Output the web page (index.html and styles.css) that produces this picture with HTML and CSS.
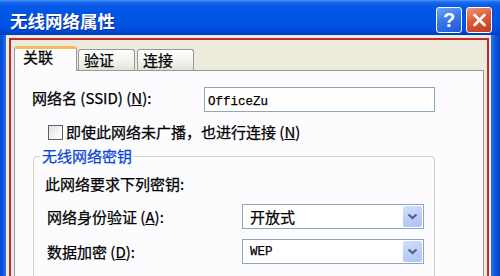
FILE: index.html
```html
<!DOCTYPE html>
<html lang="zh-CN">
<head>
<meta charset="utf-8">
<title>无线网络属性</title>
<link rel="stylesheet" href="styles.css">
</head>
<body>
<div class="window">
  <div class="titlebar">
    <span class="title">无线网络属性</span>
    <div class="caption-buttons">
      <span class="cbtn help">?</span>
      <span class="cbtn close">
        <svg width="23" height="24" viewBox="0 0 23 24"><path d="M6.5 7 L16.5 17 M16.5 7 L6.5 17" stroke="#fff" stroke-width="2.6" stroke-linecap="round" fill="none"/></svg>
      </span>
    </div>
  </div>
  <div class="frame">
    <div class="client">
      <div class="highlight">
        <div class="tabs">
          <div class="tab active">关联</div>
          <div class="tab second">验证</div>
          <div class="tab third">连接</div>
        </div>
        <div class="panel">
          <div class="row ssid">
            <span class="lbl lbl-ssid">网络名 (SSID) (<u>N</u>):</span>
            <div class="textbox"><span class="mono">OfficeZu</span></div>
          </div>
          <div class="row check">
            <span class="checkbox"></span>
            <span class="check-text">即使此网络未广播，也进行连接 (<u>N</u>)</span>
          </div>
          <fieldset class="group">
            <legend>无线网络密钥</legend>
            <div class="note">此网络要求下列密钥:</div>
            <div class="row field">
              <span class="lbl lbl-field">网络身份验证 (<u>A</u>):</span>
              <div class="select">
                <span class="select-value">开放式</span>
                <span class="arrow"><svg width="11" height="7" viewBox="0 0 11 7"><path d="M1.5 1.5 L5.5 5 L9.5 1.5" stroke="#4B6390" stroke-width="2.2" fill="none"/></svg></span>
              </div>
            </div>
            <div class="row field second-field">
              <span class="lbl lbl-field">数据加密 (<u>D</u>):</span>
              <div class="select">
                <span class="select-value mono">WEP</span>
                <span class="arrow"><svg width="11" height="7" viewBox="0 0 11 7"><path d="M1.5 1.5 L5.5 5 L9.5 1.5" stroke="#4B6390" stroke-width="2.2" fill="none"/></svg></span>
              </div>
            </div>
          </fieldset>
        </div>
      </div>
    </div>
  </div>
</div>
</body>
</html>
```
FILE: styles.css
```css
* { box-sizing: border-box; }
html, body { margin: 0; padding: 0; }
body {
  width: 500px;
  height: 276px;
  overflow: hidden;
  background: #0055E5;
  font-family: "Noto Sans CJK SC", "Noto Sans", sans-serif;
  font-size: 15px;
  color: #000;
}
.window {
  width: 500px;
  height: 276px;
  display: flex;
  flex-direction: column;
  overflow: hidden;
}
.titlebar {
  flex: none;
  height: 35px;
  display: flex;
  align-items: flex-start;
  padding: 10px 8px 0 10px;
  background: linear-gradient(180deg, #4D98F6 0, #1C6BEE 2px, #0A5DEA 5px, #0055E5 10px, #0053E2 26px, #004AD6 31px, #003DBE 35px);
}
.title {
  color: #fff;
  font-weight: bold;
  font-size: 17.5px;
  line-height: 21px;
  text-shadow: 1px 1px 0 #0B2E9A;
}
.caption-buttons {
  margin-left: auto;
  margin-top: -3px;
  display: flex;
  gap: 4px;
}
.cbtn {
  width: 26px;
  height: 26px;
  border: 1px solid #fff;
  border-radius: 3px;
  display: flex;
  align-items: center;
  justify-content: center;
}
.help {
  background: linear-gradient(160deg, #6FA6F8 0%, #3C78EC 45%, #1E56D6 100%);
  color: #fff;
  font-family: "Liberation Sans", sans-serif;
  font-weight: bold;
  font-size: 20px;
  line-height: 24px;
}
.close {
  background: linear-gradient(160deg, #EE9877 0%, #DC5E3A 45%, #C2391A 100%);
}
.frame {
  flex: 1;
  display: flex;
  padding: 0 9px 0 6px;
  background: linear-gradient(90deg, #0745C9 0, #0A58E6 3px, #2C74EE 6px, #2C74EE 491px, #0A58E6 495px, #0440C0 500px);
  min-height: 0;
}
.client {
  flex: 1;
  display: flex;
  flex-direction: column;
  background: #EEEBDC;
  padding: 3px 2px 0 3px;
}
.highlight {
  flex: 1;
  display: flex;
  flex-direction: column;
  border: 2px solid #C22B2C;
  border-bottom: none;
  padding: 6px 3px 0 3px;
}
.tabs {
  flex: none;
  height: 24px;
  display: flex;
  align-items: flex-end;
  position: relative;
  z-index: 1;
}
.tab {
  width: 57px;
  height: 21px;
  padding-left: 5px;
  line-height: 19px;
  border: 1px solid #919B9C;
  border-bottom: none;
  border-radius: 3px 3px 0 0;
  background: linear-gradient(180deg, #FFFFFF 0%, #F4F3EE 55%, #E4E2D8 100%);
  -webkit-text-stroke: 0.25px #000;
}
.tab.active {
  width: 63px;
  height: 25px;
  margin-bottom: -1px;
  padding-left: 8px;
  line-height: 15px;
  border-top: 3px solid #F3BE5E;
  background: #FCFCFE;
}
.tab.second { margin-left: 1px; }
.tab.third { margin-left: 2px; }
.panel {
  flex: 1;
  background: #FCFCFE;
  border: 1px solid #919B9C;
  border-bottom: none;
  padding: 16px 48px 0 17px;
  -webkit-text-stroke: 0.25px #000;
}
.row { display: flex; }
.ssid { align-items: flex-start; height: 25px; }
.lbl-ssid {
  width: 172px;
  line-height: 20px;
  padding-top: 1px;
}
.textbox {
  flex: 1;
  height: 25px;
  border: 1px solid #8FA6C0;
  background: #fff;
  padding: 1px 0 0 3px;
  line-height: 19px;
}
.mono {
  font-family: "Liberation Mono", monospace;
  font-size: 12.5px;
}
.check {
  align-items: center;
  height: 18px;
  margin-top: 11px;
}
.checkbox {
  width: 15px;
  height: 15px;
  margin-left: 16px;
  border: 1px solid #55606C;
  background: linear-gradient(135deg, #E4E3DC 0%, #F6F6F2 60%, #FFFFFF 100%);
}
.check-text {
  margin-left: 3px;
  line-height: 18px;
}
.group {
  margin: 6px 0 0 1px;
  padding: 10px 10px 40px 11px;
  border: 1px solid #D3D2C4;
  border-radius: 4px;
  min-width: 0;
}
.group legend {
  color: #0A46D2;
  -webkit-text-stroke: 0.25px #0A46D2;
  padding: 0 2px;
  margin-left: -5px;
  line-height: 18px;
}
.note { line-height: 18px; }
.field {
  align-items: center;
  height: 25px;
  margin-top: 11px;
  padding-left: 2px;
}
.field.second-field { margin-top: 10px; }
.lbl-field {
  width: 195px;
  line-height: 18px;
}
.select {
  width: 182px;
  height: 25px;
  border: 1px solid #8FA6C0;
  background: #fff;
  display: flex;
  align-items: center;
  padding: 0 1px 0 7px;
}
.select-value {
  flex: 1;
  line-height: 18px;
}
.arrow {
  width: 19px;
  height: 21px;
  border-radius: 2px;
  background: linear-gradient(160deg, #D3E0FB 0%, #BACDF6 60%, #AEC3F0 100%);
  display: flex;
  align-items: center;
  justify-content: center;
}
```
